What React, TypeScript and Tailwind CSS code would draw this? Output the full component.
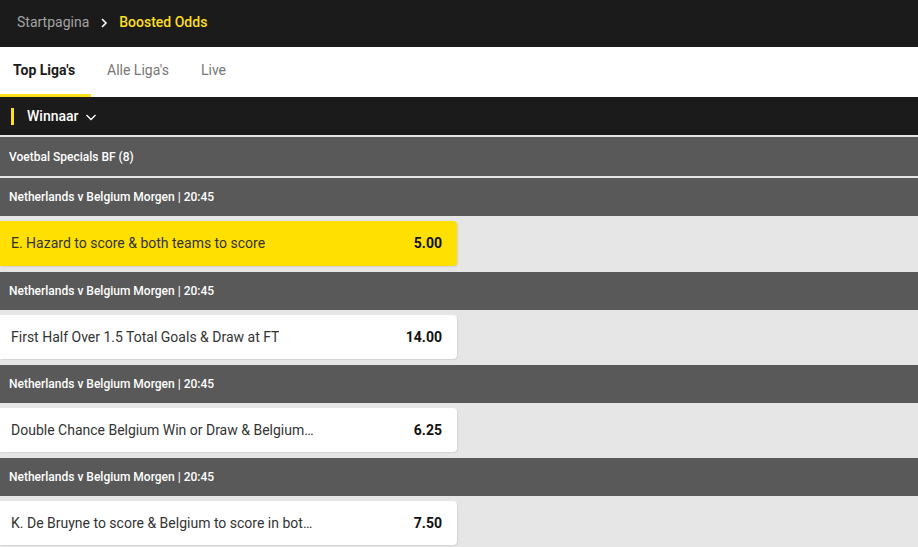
import React from "react";

const bets = [
  { title: "E. Hazard to score & both teams to score", odds: "5.00", boosted: true },
  { title: "First Half Over 1.5 Total Goals & Draw at FT", odds: "14.00", boosted: false },
  { title: "Double Chance Belgium Win or Draw & Belgium to score in both halves", odds: "6.25", boosted: false },
  { title: "K. De Bruyne to score & Belgium to score in both halves", odds: "7.50", boosted: false },
];

export default function App() {
  return (
    <div className="min-h-screen w-full bg-[#e6e6e6] font-['Roboto',sans-serif]">
      {/* breadcrumb */}
      <div className="flex h-[47px] items-center bg-[#1b1b1b] pb-[2px] pl-[17px] text-[14px]">
        <span className="text-[#a3a3a3]">Startpagina</span>
        <svg className="mx-[8px] mt-[1px]" width="14" height="14" viewBox="0 0 14 14" fill="none">
          <path d="M5 3l4 4-4 4" stroke="#ffffff" strokeWidth="1.6" />
        </svg>
        <span className="font-medium text-[#ffdf1b]">Boosted Odds</span>
      </div>

      {/* tabs */}
      <div className="flex h-[50px] bg-white text-[14px]">
        <div className="flex w-[91px] flex-col">
          <span className="flex flex-1 items-center pl-[13px] font-bold text-[#1b1b1b]">Top Liga's</span>
          <div className="h-[3px] bg-[#ffdf1b]" />
        </div>
        <span className="flex items-center pl-[16px] pb-[3px] text-[#777777]">Alle Liga's</span>
        <span className="flex items-center pl-[32px] pb-[3px] text-[#777777]">Live</span>
      </div>

      {/* market selector */}
      <div className="flex h-[38px] items-center bg-[#1b1b1b] pl-[11px]">
        <div className="h-[17px] w-[3px] bg-[#ffdf1b]" />
        <span className="ml-[13px] text-[14px] font-medium text-white">Winnaar</span>
        <svg className="ml-[6px] mt-[2px]" width="12" height="12" viewBox="0 0 12 12" fill="none">
          <path d="M1.5 4l4.5 4.5L10.5 4" stroke="#ffffff" strokeWidth="1.3" />
        </svg>
      </div>

      <div className="mt-[2px] flex h-[39px] items-center bg-[#595959] pl-[9px] text-[12px] font-medium text-white">
        Voetbal Specials BF (8)
      </div>

      <div className="mt-[2px]">
        {bets.map((b, i) => (
          <div key={i}>
            <div className="flex h-[38px] items-center bg-[#595959] pl-[9px] text-[12px] font-medium text-white">
              Netherlands v Belgium Morgen | 20:45
            </div>
            <div className="pb-[6px] pt-[5px]">
              <div
                className={
                  b.boosted
                    ? "flex h-[45px] w-[457px] items-center justify-between rounded-r-[4px] bg-[#ffe000] pl-[11px] pr-[15px] shadow-[1px_1px_1px_rgba(0,0,0,0.08)]"
                    : "flex h-[44px] w-[457px] items-center justify-between rounded-r-[4px] bg-white pl-[11px] pr-[15px] shadow-[1px_1px_1px_rgba(0,0,0,0.08)]"
                }
              >
                <span className="max-w-[305px] truncate text-[14px] text-[#333333]">{b.title}</span>
                <span className="text-[14px] font-bold text-[#111111]">{b.odds}</span>
              </div>
            </div>
          </div>
        ))}
      </div>
    </div>
  );
}
